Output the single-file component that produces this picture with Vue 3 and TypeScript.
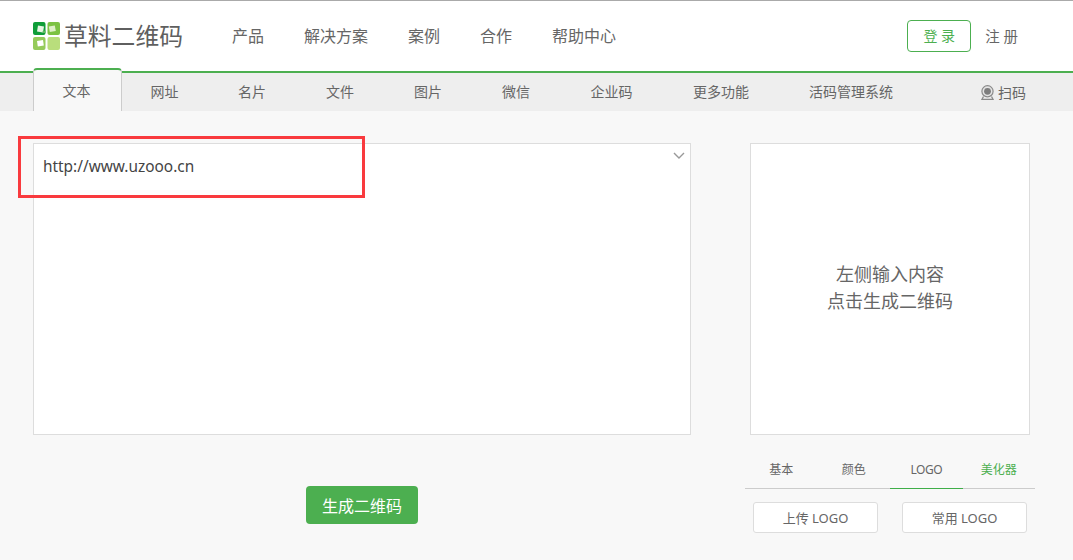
<script setup lang="ts">
const mainNav: string[] = ['产品', '解决方案', '案例', '合作', '帮助中心']
const tabs: { label: string; width: number; active?: boolean }[] = [
  { label: '文本', width: 89, active: true },
  { label: '网址', width: 87 },
  { label: '名片', width: 88 },
  { label: '文件', width: 88 },
  { label: '图片', width: 88 },
  { label: '微信', width: 88 },
  { label: '企业码', width: 103 },
  { label: '更多功能', width: 116 },
  { label: '活码管理系统', width: 144 },
]
const sideTabs: string[] = ['基本', '颜色', 'LOGO', '美化器']
</script>

<template>
  <div class="page">
    <header class="header">
      <div class="logo">
        <svg class="logo-mark" width="27" height="28" viewBox="0 0 27 28">
          <rect x="0" y="0" width="12.5" height="13" rx="2" fill="#0f9d38" />
          <path d="M5 3.5l6 1-1 6-6-1z" fill="#e8f5e4" />
          <path d="M12.5 11L10 11l-.5-2 3-.5z" fill="#5fb85f" />
          <rect x="14.5" y="0" width="12.5" height="13" rx="2" fill="#7cc242" />
          <path d="M15.8 4.5l6-1 1 5.5-6 1z" fill="#dff0c8" />
          <rect x="0" y="15" width="12.5" height="13" rx="2" fill="#95cb5a" />
          <path d="M4 19l6-1 .8 5.5-6 1z" fill="#fff" />
          <rect x="14.5" y="15" width="12.5" height="13" rx="2" fill="#b9de7c" />
        </svg>
        <span class="logo-text">草料二维码</span>
      </div>
      <nav class="main-nav">
        <a v-for="item in mainNav" :key="item" class="main-link">{{ item }}</a>
      </nav>
      <div class="auth">
        <a class="login">登 录</a>
        <a class="register">注 册</a>
      </div>
    </header>

    <div class="tabbar">
      <a
        v-for="tab in tabs"
        :key="tab.label"
        class="tab"
        :class="{ active: tab.active }"
        :style="{ width: tab.width + 'px' }"
      >{{ tab.label }}</a>
      <a class="scan">
        <svg width="15" height="15" viewBox="0 0 15 15">
          <circle cx="7.5" cy="6.3" r="5.6" fill="#e4e4e4" stroke="#8a8a8a" stroke-width="1.2" />
          <circle cx="7.5" cy="6.3" r="3.4" fill="#7d7d7d" />
          <path d="M3.5 11.5L2 14.3h11l-1.5-2.8" fill="none" stroke="#8a8a8a" stroke-width="1.3" />
        </svg>
        <span>扫码</span>
      </a>
    </div>

    <main class="content">
      <section class="left">
        <div class="editor">
          <span class="editor-text">http://www.uzooo.cn</span>
          <svg class="chevron" width="12" height="7" viewBox="0 0 12 7">
            <path d="M1 1l5 5 5-5" fill="none" stroke="#999" stroke-width="1.4" />
          </svg>
        </div>
        <div class="generate-row">
          <button class="generate" type="button">生成二维码</button>
        </div>
      </section>

      <aside class="right">
        <div class="preview">
          <p>左侧输入内容</p>
          <p>点击生成二维码</p>
        </div>
        <div class="side-tabs">
          <a
            v-for="(t, i) in sideTabs"
            :key="t"
            class="side-tab"
            :class="{ current: i === 2, accent: i === 3 }"
          >{{ t }}</a>
        </div>
        <div class="logo-actions">
          <button class="logo-btn" type="button">上传 LOGO</button>
          <button class="logo-btn" type="button">常用 LOGO</button>
        </div>
      </aside>
    </main>

    <div class="annotation"></div>
  </div>
</template>

<style>
html,
body {
  margin: 0;
  background: #f8f8f8;
}
</style>

<style scoped>
.page {
  position: relative;
  width: 1073px;
  height: 560px;
  overflow: hidden;
  background: #f8f8f8;
  font-family: "Noto Sans", "Noto Sans CJK SC", sans-serif;
  color: #666;
}
.header {
  box-sizing: border-box;
  height: 73px;
  display: flex;
  align-items: center;
  padding: 0 55px 0 33px;
  background: #fff;
  border-top: 1px solid #aaa;
  border-bottom: 2px solid #4caf50;
}
.logo {
  display: flex;
  align-items: center;
  gap: 4px;
  width: 199px;
}
.logo-mark {
  flex: none;
}
.logo-text {
  font-size: 23.8px;
  line-height: 28px;
  font-weight: 400;
  color: #5f5f5f;
  white-space: nowrap;
}
.main-nav {
  display: flex;
  gap: 40px;
}
.main-link {
  font-size: 16px;
  line-height: 24px;
  color: #666;
}
.auth {
  margin-left: auto;
  display: flex;
  align-items: center;
  gap: 14px;
}
.login {
  box-sizing: border-box;
  width: 64px;
  height: 32px;
  line-height: 30px;
  text-align: center;
  font-size: 14px;
  color: #4caf50;
  border: 1px solid #4caf50;
  border-radius: 4px;
}
.register {
  margin-top: -2px;
  font-size: 14.5px;
  color: #666;
}
.tabbar {
  height: 38px;
  display: flex;
  align-items: stretch;
  padding-left: 33px;
  padding-right: 47px;
  background: #eee;
  position: relative;
}
.tab {
  font-size: 14px;
  line-height: 38px;
  text-align: center;
  color: #666;
  white-space: nowrap;
}
.tab.active {
  box-sizing: border-box;
  margin-top: -5px;
  margin-right: -1px;
  padding-right: 2px;
  height: 43px;
  line-height: 42px;
  background: #f8f8f8;
  border-top: 2px solid #4caf50;
  border-left: 1px solid #ccc;
  border-right: 1px solid #ccc;
  border-radius: 4px 4px 0 0;
}
.scan {
  margin-left: auto;
  display: flex;
  align-items: center;
  gap: 3px;
  font-size: 14px;
  color: #666;
}
.content {
  display: flex;
  padding: 32px 43px 0 33px;
  gap: 59px;
}
.left {
  width: 658px;
}
.editor {
  box-sizing: border-box;
  position: relative;
  height: 292px;
  padding: 11px 9px;
  background: #fff;
  border: 1px solid #ddd;
}
.editor-text {
  font-size: 15.4px;
  line-height: 22px;
  color: #444;
}
.chevron {
  position: absolute;
  top: 8px;
  right: 5px;
}
.generate-row {
  display: flex;
  justify-content: center;
  margin-top: 51px;
}
.generate {
  width: 112px;
  height: 38px;
  border: 0;
  border-radius: 4px;
  background: #4caf50;
  color: #fff;
  font: 16px "Noto Sans", "Noto Sans CJK SC", sans-serif;
}
.right {
  width: 280px;
}
.preview {
  box-sizing: border-box;
  height: 292px;
  display: flex;
  flex-direction: column;
  align-items: center;
  justify-content: center;
  padding-bottom: 2px;
  background: #fff;
  border: 1px solid #ddd;
  font-size: 18px;
  line-height: 27px;
  color: #666;
}
.preview p {
  margin: 0;
}
.side-tabs {
  display: grid;
  grid-template-columns: repeat(4, 1fr);
  width: 290px;
  margin: 20px 0 0 -5px;
}
.side-tab {
  box-sizing: border-box;
  height: 34px;
  line-height: 30px;
  text-align: center;
  font-size: 12px;
  color: #666;
  border-bottom: 1px solid #ccc;
}
.side-tab.current {
  border-bottom-color: #3fae49;
  letter-spacing: -0.5px;
}
.side-tab.accent {
  color: #4caf50;
}
.logo-actions {
  display: flex;
  justify-content: space-between;
  width: 274px;
  margin: 13px 0 0 3px;
}
.logo-btn {
  box-sizing: border-box;
  width: 125px;
  height: 31px;
  padding-bottom: 2px;
  background: #fff;
  border: 1px solid #ddd;
  border-radius: 3px;
  color: #666;
  font: 13px "Noto Sans", "Noto Sans CJK SC", sans-serif;
}
.annotation {
  position: absolute;
  left: 18px;
  top: 136px;
  width: 347px;
  height: 62px;
  box-sizing: border-box;
  border: 3px solid #f93a3e;
}
</style>
